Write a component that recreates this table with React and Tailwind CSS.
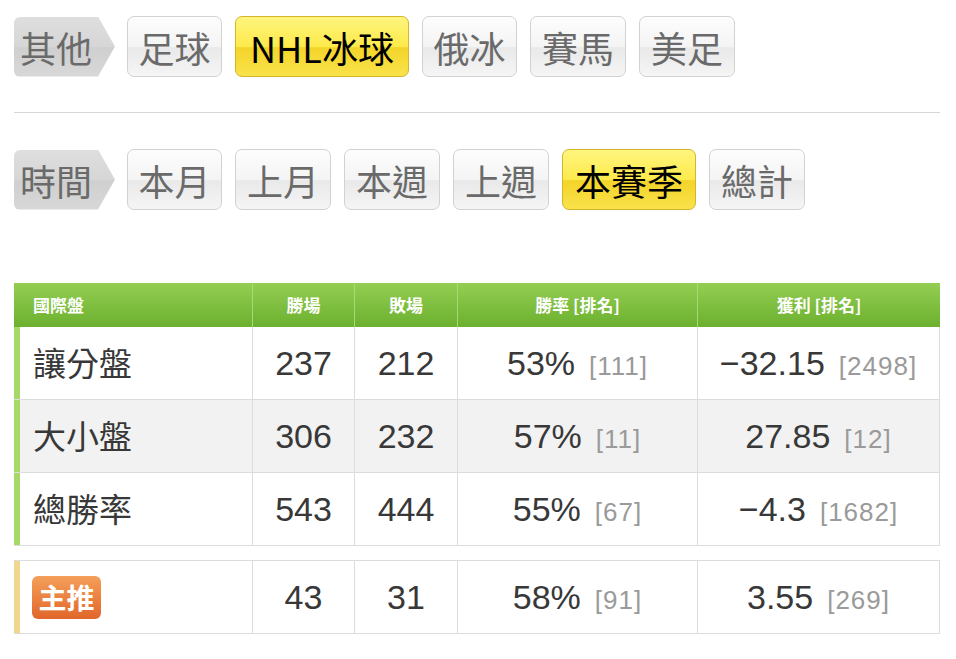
import React from 'react';

const cjk = "font-['Noto_Sans_CJK_TC','Noto_Sans',sans-serif]";
const num = "font-['Liberation_Sans','Noto_Sans_CJK_TC',sans-serif]";

const sports = [
    { name: '足球', w: 'w-[95px]' },
    { name: 'NHL冰球', w: 'w-[174px]', active: true },
    { name: '俄冰', w: 'w-[95px]' },
    { name: '賽馬', w: 'w-[96px]' },
    { name: '美足', w: 'w-[96px]' },
];

const periods = [
    { name: '本月', w: 'w-[95px]' },
    { name: '上月', w: 'w-[96px]' },
    { name: '本週', w: 'w-[96px]' },
    { name: '上週', w: 'w-[96px]' },
    { name: '本賽季', w: 'w-[134px]', active: true },
    { name: '總計', w: 'w-[96px]' },
];

const rows = [
    { label: '讓分盤', win: 237, lose: 212, rate: '53%', rateRank: 111, profit: '−32.15', profitRank: 2498, bg: 'bg-white' },
    { label: '大小盤', win: 306, lose: 232, rate: '57%', rateRank: 11, profit: '27.85', profitRank: 12, bg: 'bg-[#f2f2f2]' },
    { label: '總勝率', win: 543, lose: 444, rate: '55%', rateRank: 67, profit: '−4.3', profitRank: 1682, bg: 'bg-white' },
];

const FilterRow = ({ title, items }) => (
    <div className="flex items-center gap-[12px]">
        <div className={`${cjk} w-[101px] h-[60px] rounded-l-[6px] bg-[linear-gradient(to_bottom,#dedede_0%,#d6d6d6_50%,#cfcfcf_51%,#d8d8d8_100%)] [clip-path:polygon(0_0,84px_0,100%_50%,84px_100%,0_100%)] flex items-center pl-[6px] text-[36px] leading-none text-[#6a6a6a]`}>
            {title}
        </div>
        <div className="flex gap-[13px]">
            {items.map((item) => (
                <div
                    key={item.name}
                    className={
                        item.active
                            ? `${cjk} ${item.w} h-[61px] rounded-[7px] border border-[#d4b52c] bg-[linear-gradient(to_bottom,#fff57e_0%,#fdea4c_50%,#f3d42a_52%,#f9e24a_100%)] flex items-center justify-center text-[36px] leading-none text-black`
                            : `${cjk} ${item.w} h-[61px] rounded-[7px] border border-[#d2d2d2] bg-[linear-gradient(to_bottom,#fdfdfd_0%,#f4f4f4_50%,#e9e9e9_52%,#f5f5f5_100%)] flex items-center justify-center text-[36px] leading-none text-[#6a6a6a]`
                    }
                >
                    {item.name}
                </div>
            ))}
        </div>
    </div>
);

const Stat = ({ value, rank }) => (
    <div className="flex items-baseline justify-center gap-[14px]">
        <span className={`${num} text-[34px] text-[#383838]`}>{value}</span>
        <span className={`${num} text-[26px] text-[#9a9a9a] tracking-[1px]`}>[{rank}]</span>
    </div>
);

const cols = 'grid grid-cols-[239px_102px_103px_240px_1fr]';

const App = () => {
    return (
        <div className="w-[956px] h-[659px] bg-white pl-[14px] pr-[16px] pt-[16px]">
            <FilterRow title="其他" items={sports} />
            <div className="mt-[35px] h-px bg-[#d6d6d6]" />
            <div className="mt-[36px]">
                <FilterRow title="時間" items={periods} />
            </div>

            <div className="mt-[73px]">
                <div className={`${cols} h-[44px] bg-[linear-gradient(to_bottom,#93ce52,#6cb02f)] ${cjk} text-[17px] font-bold text-white`}>
                    <div className="flex items-center pl-[19px] border-r border-[#a8da74]">國際盤</div>
                    <div className="flex items-center justify-center border-r border-[#a8da74]">勝場</div>
                    <div className="flex items-center justify-center border-r border-[#a8da74]">敗場</div>
                    <div className="flex items-center justify-center border-r border-[#a8da74]">勝率 [排名]</div>
                    <div className="flex items-center justify-center">獲利 [排名]</div>
                </div>

                {rows.map((row) => (
                    <div key={row.label} className={`${cols} h-[73px] ${row.bg} border-b border-r border-[#dcdcdc]`}>
                        <div className={`${cjk} flex items-center pl-[13px] border-l-[6px] border-l-[#a6d86a] border-r border-r-[#dcdcdc] text-[33px] text-[#383838]`}>
                            {row.label}
                        </div>
                        <div className={`${num} flex items-center justify-center border-r border-[#dcdcdc] text-[34px] text-[#383838]`}>{row.win}</div>
                        <div className={`${num} flex items-center justify-center border-r border-[#dcdcdc] text-[34px] text-[#383838]`}>{row.lose}</div>
                        <div className="flex items-center justify-center border-r border-[#dcdcdc]">
                            <Stat value={row.rate} rank={row.rateRank} />
                        </div>
                        <div className="flex items-center justify-center">
                            <Stat value={row.profit} rank={row.profitRank} />
                        </div>
                    </div>
                ))}

                <div className={`${cols} mt-[14px] h-[74px] bg-white border-t border-b border-r border-[#dcdcdc]`}>
                    <div className="flex items-center pl-[12px] border-l-[6px] border-l-[#f1d690] border-r border-r-[#dcdcdc]">
                        <span className={`${cjk} w-[69px] h-[43px] rounded-[6px] bg-[linear-gradient(to_bottom,#f4a05a,#e1662a)] flex items-center justify-center text-[28px] font-bold leading-none text-white`}>
                            主推
                        </span>
                    </div>
                    <div className={`${num} flex items-center justify-center border-r border-[#dcdcdc] text-[34px] text-[#383838]`}>43</div>
                    <div className={`${num} flex items-center justify-center border-r border-[#dcdcdc] text-[34px] text-[#383838]`}>31</div>
                    <div className="flex items-center justify-center border-r border-[#dcdcdc]">
                        <Stat value="58%" rank={91} />
                    </div>
                    <div className="flex items-center justify-center">
                        <Stat value="3.55" rank={269} />
                    </div>
                </div>
            </div>
        </div>
    );
};

export default App;
